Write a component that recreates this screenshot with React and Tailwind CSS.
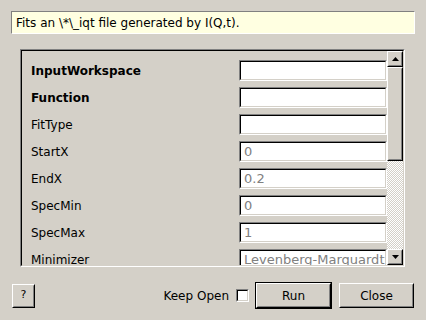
import React from 'react'

// Bevel helpers in the classic grey style (outer + inner edge).
function Sunken({ className = '', inner = '', children }) {
  return (
    <div className={'border border-t-[#808080] border-l-[#808080] border-b-white border-r-white ' + className}>
      <div className={'h-full border border-t-black border-l-black border-b-[#d4d0c8] border-r-[#d4d0c8] ' + inner}>
        {children}
      </div>
    </div>
  )
}

function Raised({ className = '', inner = '', children }) {
  return (
    <div className={'border border-t-white border-l-white border-b-black border-r-black ' + className}>
      <div className={'h-full border border-t-[#d4d0c8] border-l-[#d4d0c8] border-b-[#808080] border-r-[#808080] bg-[#d4d0c8] ' + inner}>
        {children}
      </div>
    </div>
  )
}

const rows = [
  { label: 'InputWorkspace', bold: true, value: '' },
  { label: 'Function', bold: true, value: '' },
  { label: 'FitType', value: '' },
  { label: 'StartX', value: '0' },
  { label: 'EndX', value: '0.2' },
  { label: 'SpecMin', value: '0' },
  { label: 'SpecMax', value: '1' },
  { label: 'Minimizer', value: 'Levenberg-Marquardt' },
]

function Arrow({ down }) {
  return (
    <svg width="7" height="4" viewBox="0 0 7 4">
      <path d={down ? 'M0 0h7L3.5 4z' : 'M0 4h7L3.5 0z'} fill="#000" />
    </svg>
  )
}

export default function App() {
  return (
    <div className="w-[426px] h-[320px] overflow-hidden bg-[#d4d0c8] font-['DejaVu_Sans',sans-serif] text-[12px] text-black">
      <div className="px-[11px] pt-[11px]">
        <div className="h-[23px] flex items-center pl-[4px] bg-[#ffffe1] border border-t-[#808080] border-l-[#808080] border-b-white border-r-white whitespace-nowrap">
          Fits an \*\_iqt file generated by I(Q,t).
        </div>
      </div>

      <Sunken className="mt-[15px] ml-[20px] w-[385px] h-[218px]" inner="flex">
        <div className="flex-1 overflow-hidden pt-[9px] pl-[9px] flex flex-col gap-[6px]">
          {rows.map((r) => (
            <div key={r.label} className="flex items-center h-[21px] shrink-0">
              <div className={'w-[208px] ' + (r.bold ? 'font-bold' : '')}>{r.label}</div>
              <Sunken className="w-[148px] h-[21px] bg-white" inner="flex items-center pl-[3px] text-[13px] text-[#808080] overflow-hidden whitespace-nowrap">
                {r.value}
              </Sunken>
            </div>
          ))}
        </div>
        <div className="w-[16px] flex flex-col">
          <Raised className="h-[16px]" inner="flex items-center justify-center">
            <Arrow />
          </Raised>
          <Raised className="h-[94px]" />
          <div className="flex-1 bg-[repeating-conic-gradient(#d4d0c8_0_25%,#ffffff_0_50%)] bg-[length:2px_2px]" />
          <Raised className="h-[16px]" inner="flex items-center justify-center">
            <Arrow down />
          </Raised>
        </div>
      </Sunken>

      <div className="mt-[15px] h-[27px] flex items-center px-[12px]">
        <Raised className="w-[23px] h-[24px]" inner="flex items-center justify-center text-[11px]">
          ?
        </Raised>
        <div className="ml-auto">Keep Open</div>
        <Sunken className="ml-[7px] w-[13px] h-[13px] bg-white" />
        <div className="ml-[6px] border border-black">
          <Raised className="w-[75px] h-[25px]" inner="flex items-center justify-center">
            Run
          </Raised>
        </div>
        <Raised className="ml-[7px] w-[75px] h-[25px]" inner="flex items-center justify-center">
          Close
        </Raised>
      </div>
    </div>
  )
}
